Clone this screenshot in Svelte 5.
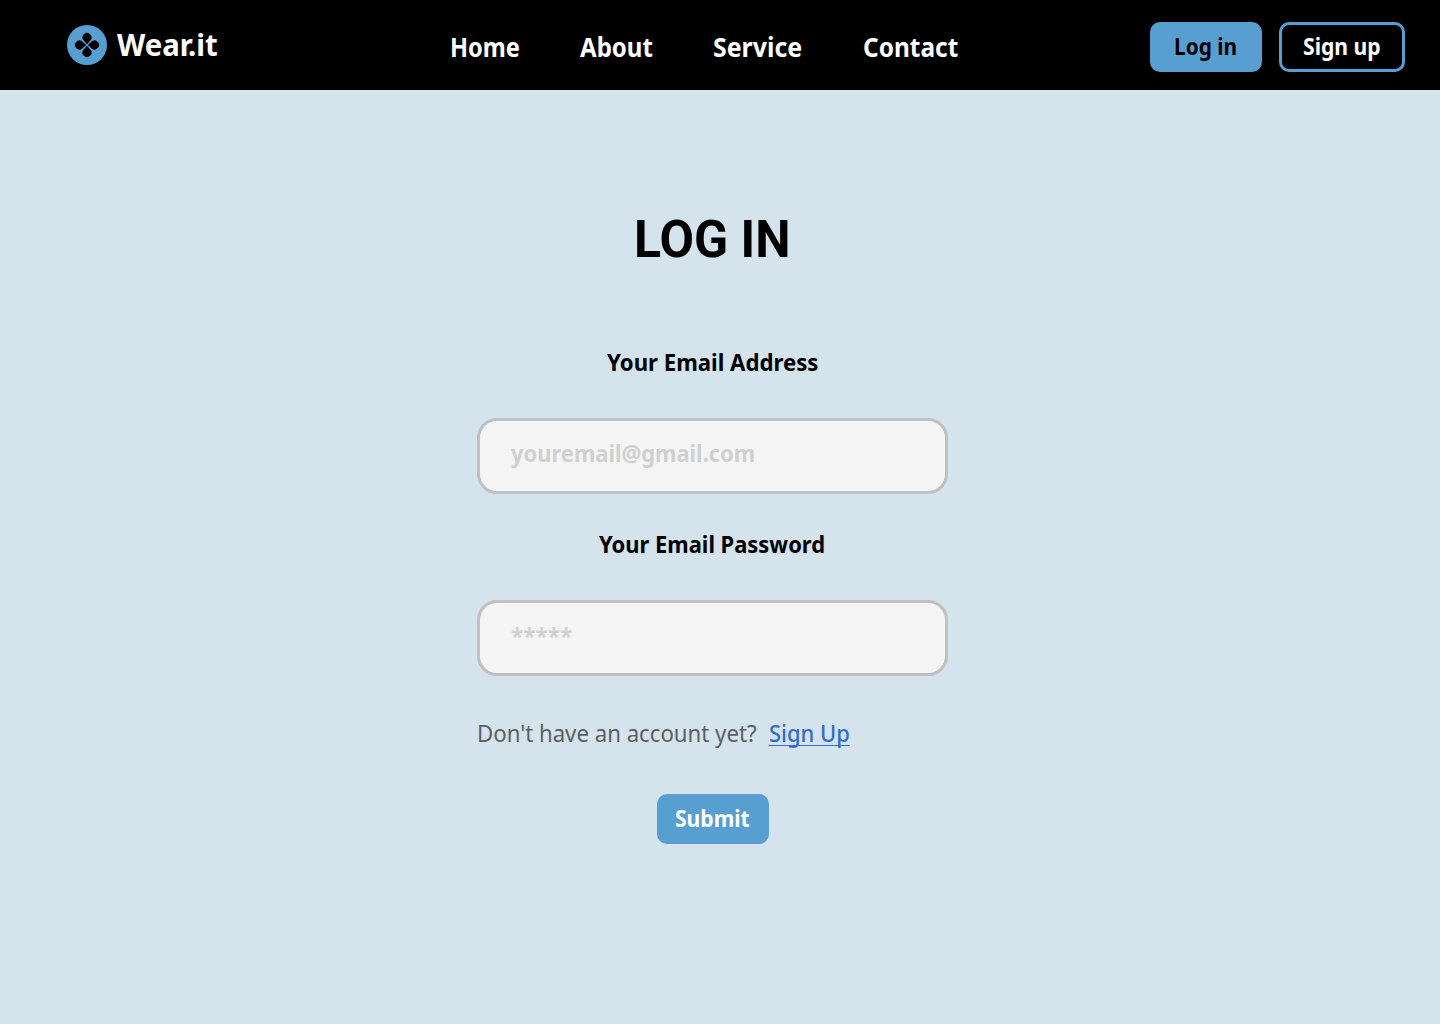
<script>
  const links = [
    { label: 'Home', width: 70 },
    { label: 'About', width: 73 },
    { label: 'Service', width: 89.5 },
    { label: 'Contact', width: 95 }
  ];

  // Condenses a label horizontally so that it fills the given width.
  function fit(node, width) {
    const scale = width / node.offsetWidth;
    node.style.setProperty('--fit', String(scale));
  }
</script>

<div class="page">
  <header>
    <a class="brand" href="#home">
      <svg width="40" height="40" viewBox="0 0 40 40" aria-hidden="true">
        <circle cx="20" cy="20" r="20" fill="#579fd0" />
        {#each [0, 90, 180, 270] as angle}
          <path
            d="M20 19.2 L16.5 15.3 A4.5 4.5 0 1 1 23.5 15.3 Z"
            transform={`rotate(${angle} 20 20)`}
          />
        {/each}
      </svg>
      <span class="slot wordmark"><span class="text" use:fit={101}>Wear.it</span></span>
    </a>
    <nav>
      {#each links as link}
        <a class="slot" href="#{link.label}" style:width="{link.width}px">
          <span class="text" use:fit={link.width}>{link.label}</span>
        </a>
      {/each}
    </nav>
    <div class="actions">
      <button class="button login"><span class="text" use:fit={63}>Log in</span></button>
      <button class="button signup"><span class="text" use:fit={78}>Sign up</span></button>
    </div>
  </header>

  <main>
    <h1><span class="text" use:fit={157}>LOG IN</span></h1>
    <form>
      <label for="email"><span class="text" use:fit={212}>Your Email Address</span></label>
      <div class="field" id="email"><span class="text" use:fit={244}>youremail@gmail.com</span></div>
      <label for="password"><span class="text" use:fit={226}>Your Email Password</span></label>
      <div class="field masked" id="password"><span class="text" use:fit={61}>*****</span></div>
      <p>
        <span class="slot question"><span class="text" use:fit={280}>Don't have an account yet?</span></span>
        <a class="slot register" href="#signup"><span class="text" use:fit={81}>Sign Up</span></a>
      </p>
      <button class="button submit" type="button"><span class="text" use:fit={75}>Submit</span></button>
    </form>
  </main>
</div>

<style>
  :global(body) {
    margin: 0;
  }
  .page {
    width: 1440px;
    height: 1024px;
    overflow: hidden;
    background: #d5e3ec;
    font-family: 'Noto Sans', 'Open Sans', sans-serif;
    font-weight: 700;
    color: #000;
  }
  a {
    color: inherit;
    text-decoration: none;
  }
  .text {
    display: inline-block;
    flex: none;
    white-space: nowrap;
    transform: scaleX(var(--fit, 1));
    transform-origin: left center;
  }
  .slot {
    display: flex;
  }
  header {
    display: grid;
    grid-template-columns: 383px 700px 1fr;
    box-sizing: border-box;
    height: 90px;
    padding-left: 67px;
    background: #000;
    color: #fff;
  }
  .brand {
    display: flex;
    gap: 10px;
    height: 40px;
    padding-top: 25px;
    font-size: 31px;
    line-height: 38px;
  }
  .wordmark {
    width: 100px;
  }
  nav {
    display: flex;
    gap: 60px;
    padding-top: 27px;
    font-size: 27px;
    line-height: 40px;
    height: 40px;
  }
  .actions {
    display: flex;
    gap: 17px;
    padding-top: 22px;
  }
  .button {
    display: flex;
    box-sizing: border-box;
    width: 112px;
    height: 50px;
    padding: 0;
    border: 0;
    border-radius: 10px;
    background: #579fd0;
    font: inherit;
    font-size: 22.5px;
    line-height: 50px;
    color: #fff;
  }
  .login {
    padding-left: 24px;
    color: #000;
  }
  .signup {
    width: 126px;
    padding-left: 21px;
    border: 3px solid #579fd0;
    background: #000;
    line-height: 44px;
  }
  .submit {
    margin: 41px 0 0 180px;
    padding-left: 18px;
  }
  main {
    display: flex;
    flex-direction: column;
    width: 471px;
    margin-left: 477px;
    padding-top: 110px;
  }
  h1 {
    display: flex;
    width: 157px;
    margin: 0 auto;
    font-family: Roboto, 'Noto Sans', sans-serif;
    font-size: 51px;
    line-height: 80px;
  }
  form {
    padding-top: 63px;
  }
  label {
    display: flex;
    width: 212px;
    margin: 0 auto 35px;
    font-size: 22.5px;
    line-height: 40px;
  }
  label[for='password'] {
    width: 227px;
    margin-top: 31px;
  }
  .field {
    display: flex;
    box-sizing: border-box;
    height: 76px;
    padding: 12px 31px;
    border: 3px solid #c0c0c0;
    border-radius: 20px;
    background: #f5f5f5;
    color: #d0d0d0;
    font-size: 23px;
    line-height: 40px;
  }
  .masked {
    padding-top: 13px;
  }
  p {
    display: flex;
    gap: 12px;
    margin: 37px 0 0;
    font-size: 23px;
    font-weight: 400;
    line-height: 40px;
    color: #5b5f63;
  }
  .question {
    width: 280px;
  }
  .register {
    color: #316dca;
    font-weight: 500;
  }
  .register .text {
    text-decoration: underline 1px #316dca;
    text-underline-offset: 3px;
    text-decoration-skip-ink: none;
  }
</style>
